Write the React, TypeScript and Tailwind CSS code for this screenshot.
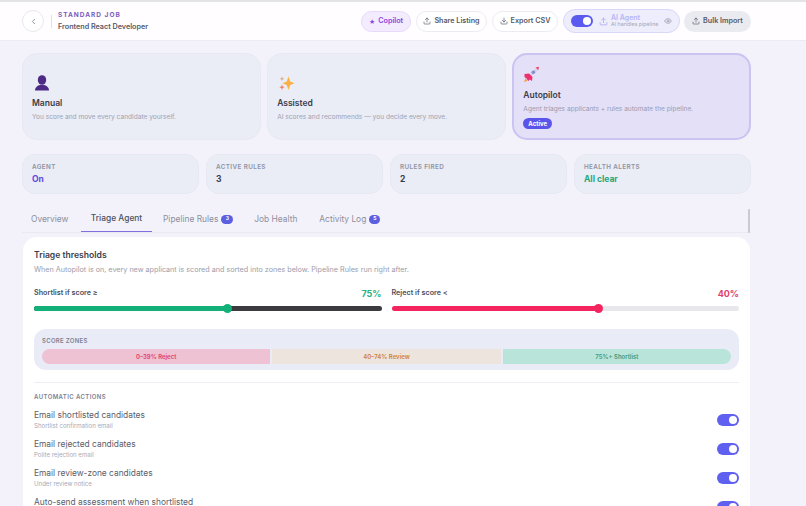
import { ChevronLeft, Download, Eye, Upload } from "lucide-react";

const modes = [
  { id: "manual", name: "Manual", desc: "You score and move every candidate yourself." },
  { id: "assisted", name: "Assisted", desc: "AI scores and recommends — you decide every move." },
];

const actions = [
  { title: "Email shortlisted candidates", sub: "Shortlist confirmation email" },
  { title: "Email rejected candidates", sub: "Polite rejection email" },
  { title: "Email review-zone candidates", sub: "Under review notice" },
  { title: "Auto-send assessment when shortlisted", sub: "\u00a0" },
];

function PersonIcon() {
  return (
    <svg width="16" height="16" viewBox="0 0 16 16">
      <ellipse cx="8" cy="5" rx="4.200" ry="4.800" fill="#4c2a85" />
      <path d="M1 15.500c0-3.400 2.800-5 5-5.500h4c2.200.5 5 2.100 5 5.500z" fill="#4c2a85" />
    </svg>
  );
}

function SparkleIcon() {
  return (
    <svg width="16" height="16" viewBox="0 0 16 16">
      <path d="M9.500 1.500 11.200 6.500 15.500 8.300 11.200 10.100 9.500 15 7.800 10.100 3.500 8.300 7.800 6.500z" fill="#fbb040" />
      <path d="M3 9.500 3.800 11.400 5.700 12.200 3.800 13 3 15 2.200 13 .3 12.200 2.200 11.400z" fill="#f4845f" />
      <path d="M3 1.500 3.700 3 5.200 3.700 3.700 4.400 3 6 2.300 4.400 .8 3.700 2.300 3z" fill="#d8b38a" />
    </svg>
  );
}

function RocketIcon() {
  return (
    <svg width="17" height="17" viewBox="0 0 17 17">
      <path d="M5 10 12.500 2.500 14.500 4.500 7 12z" fill="#d3cfe8" />
      <circle cx="10.300" cy="6.300" r="1.800" fill="#7f8fc9" />
      <path d="M12.500 1.500 16 .8 15.300 4.300 14 3z" fill="#ef4565" />
      <path d="M1.500 8 6 7.500 9.500 11 9 15 6.800 13.500 5.300 15 3.500 12.500 1.500 11z" fill="#ec2f70" />
      <path d="M2.500 12.500 4.800 14.800 .8 16z" fill="#f59e42" />
    </svg>
  );
}

function Toggle() {
  return (
    <div className="flex h-[12px] w-[22px] shrink-0 items-center justify-end rounded-full bg-[#6060f0] pr-[2px]">
      <div className="h-[8px] w-[8px] rounded-full bg-white" />
    </div>
  );
}

function Stat({ label, value, color }: { label: string; value: string; color: string }) {
  return (
    <div className="h-[40px] rounded-[13px] border border-[#e6e8f3] bg-[#eaecf6] px-[9px] pt-[8px]">
      <div className="text-[6.300px] font-semibold leading-[9px] tracking-[0.4px] text-[#8f93a3]">{label}</div>
      <div className={`mt-[1px] text-[8.500px] font-bold leading-[13px] ${color}`}>{value}</div>
    </div>
  );
}

function Slider({ label, value, valueColor, fill, track, thumb, pct }: { label: string; value: string; valueColor: string; fill: string; track: string; thumb: string; pct: number }) {
  return (
    <div className="flex-1">
      <div className="flex items-center justify-between">
        <span className="text-[7.200px] font-semibold text-[#4b5060]">{label}</span>
        <span className={`pt-[2px] text-[9px] font-bold leading-[12px] ${valueColor}`}>{value}</span>
      </div>
      <div className={`relative mt-[6px] h-[5px] rounded-full ${track}`}>
        <div className={`h-full rounded-full ${fill}`} style={{ width: `${pct}%` }} />
        <div className={`absolute top-[-2px] ml-[-4px] h-[9px] w-[9px] rounded-full ${thumb}`} style={{ left: `${pct}%` }} />
      </div>
    </div>
  );
}

export default function App() {
  return (
    <div className="h-[506px] w-[806px] overflow-hidden bg-[#f3f2fa] font-['Inter',sans-serif]">
      <div className="h-[2px] bg-[#e4e4e6]" />
      <header className="flex h-[39px] items-center border-b border-[#ecebf3] bg-[#fffdff] pl-[22px] pr-[55px]">
        <button className="flex h-[22px] w-[22px] items-center justify-center rounded-full border border-[#e8e8ee] bg-white">
          <ChevronLeft size={9} className="text-[#6b7280]" />
        </button>
        <div className="ml-[7px] h-[13px] w-px bg-[#dfdfe6]" />
        <div className="ml-[6px]">
          <div className="text-[6.500px] font-bold leading-[9px] tracking-[1px] text-[#7a5cc0]">STANDARD JOB</div>
          <div className="mt-[1px] text-[7.200px] font-semibold leading-[11px] text-[#555a68]">Frontend React Developer</div>
        </div>
        <div className="ml-auto flex items-center gap-[5px]">
          <button className="flex h-[21px] w-[50px] items-center justify-center gap-[3px] rounded-full border border-[#e6d9fb] bg-[#f3ecfe] text-[7.200px] font-semibold text-[#8a3fe0]">
            <span className="text-[6px]">★</span>Copilot
          </button>
          <button className="flex h-[21px] w-[71px] items-center justify-center gap-[3px] rounded-full border border-[#ecebf2] bg-white text-[7.200px] font-semibold text-[#555a68]">
            <Upload size={8} />Share Listing
          </button>
          <button className="flex h-[21px] w-[66px] items-center justify-center gap-[3px] rounded-full border border-[#ecebf2] bg-white text-[7.200px] font-semibold text-[#555a68]">
            <Download size={8} />Export CSV
          </button>
          <div className="flex h-[24px] w-[117px] items-center rounded-full border border-[#d9d7f8] bg-[#eeedfc] pl-[7px] pr-[7px]">
            <div className="flex h-[12px] w-[22px] items-center justify-end rounded-full bg-[#5b5bf0] pr-[2px]">
              <div className="h-[8px] w-[8px] rounded-full bg-white" />
            </div>
            <Upload size={9} className="ml-[6px] text-[#a5a6f3]" />
            <div className="ml-[3px]">
              <div className="text-[7px] font-semibold leading-[7px] text-[#b4b5f6]">AI Agent</div>
              <div className="text-[5.300px] leading-[7px] text-[#a3a5b5]">AI handles pipeline</div>
            </div>
            <Eye size={8} className="ml-auto text-[#8f93a3]" />
          </div>
          <button className="ml-[-1px] flex h-[21px] w-[67px] items-center justify-center gap-[3px] rounded-full bg-[#e9ebf1] text-[7.200px] font-semibold text-[#555a68]">
            <Upload size={8} />Bulk Import
          </button>
        </div>
      </header>

      <main className="ml-[22px] w-[729px] pt-[12px]">
        <div className="grid grid-cols-3 gap-[6.500px]">
          {modes.map((m) => (
            <div key={m.id} className="flex h-[87px] flex-col rounded-[15px] border border-[#e6e8f3] bg-[#eaecf6] px-[9px] pt-[21px]">
              <div className="pl-[2px]">{m.id === "manual" ? <PersonIcon /> : <SparkleIcon />}</div>
              <div className="mt-[6px] text-[8.500px] font-semibold leading-[12px] text-[#3a3d4a]">{m.name}</div>
              <div className="mt-[3px] text-[6.600px] leading-[10px] text-[#a0a3b1]">{m.desc}</div>
            </div>
          ))}
          <div className="flex h-[87px] flex-col rounded-[15px] border-2 border-[#c9c4f2] bg-[#e4e0f8] px-[9px] pt-[11px]">
            <RocketIcon />
            <div className="mt-[6px] text-[8.500px] font-semibold leading-[12px] text-[#3a3d4a]">Autopilot</div>
            <div className="mt-[3px] text-[6.600px] leading-[10px] text-[#9a9cb0]">Agent triages applicants + rules automate the pipeline.</div>
            <div className="mt-[4px] w-fit rounded-full bg-[#5b54ea] px-[5px] text-[6px] font-bold leading-[11px] text-white">Active</div>
          </div>
        </div>

        <div className="mt-[14px] grid grid-cols-4 gap-[7px]">
          <Stat label="AGENT" value="On" color="text-[#6547e0]" />
          <Stat label="ACTIVE RULES" value="3" color="text-[#3a3d4a]" />
          <Stat label="RULES FIRED" value="2" color="text-[#3a3d4a]" />
          <Stat label="HEALTH ALERTS" value="All clear" color="text-[#1fa97a]" />
        </div>

        <div className="relative mt-[12px] flex h-[27px] items-stretch border-b border-[#e9e9f2] text-[8.400px]">
          <div className="flex w-[59px] items-center pl-[9px] text-[#8c8f9e]">Overview</div>
          <div className="flex w-[71px] items-center justify-center border-b border-[#7f6fe0] font-medium text-[#4b5060]">Triage Agent</div>
          <div className="ml-[11px] flex items-center gap-[3px] text-[#8c8f9e]">
            Pipeline Rules
            <span className="flex h-[9px] w-[12px] items-center justify-center rounded-full bg-[#5b5fe0] text-[5px] font-bold text-white">3</span>
          </div>
          <div className="ml-[21px] flex items-center text-[#8c8f9e]">Job Health</div>
          <div className="ml-[22px] flex items-center gap-[3px] text-[#8c8f9e]">
            Activity Log
            <span className="flex h-[9px] w-[11px] items-center justify-center rounded-full bg-[#5b5fe0] text-[5px] font-bold text-white">5</span>
          </div>
          <div className="absolute right-[1px] top-[3px] h-[24px] w-[2px] rounded-full bg-[#c8cad6]" />
        </div>

        <section className="ml-[1px] mt-[4px] h-[300px] w-[727px] rounded-t-[14px] bg-white px-[11px] pt-[13px]">
          <h2 className="text-[8.600px] font-semibold leading-[11px] text-[#3a3d4a]">Triage thresholds</h2>
          <p className="mt-[4px] text-[7.200px] leading-[10px] text-[#9a9cab]">
            When Autopilot is on, every new applicant is scored and sorted into zones below. Pipeline Rules run right after.
          </p>
          <div className="mt-[11px] flex gap-[10px]">
            <Slider label="Shortlist if score ≥" value="75%" valueColor="text-[#2fae80]" fill="bg-[#14b07a]" track="bg-[#3c3c40]" thumb="bg-[#14b07a]" pct={55.500} />
            <Slider label="Reject if score <" value="40%" valueColor="text-[#e23d6d]" fill="bg-[#f4245e]" track="bg-[#e8e8ec]" thumb="bg-[#f4245e]" pct={59.500} />
          </div>

          <div className="mt-[18px] h-[41px] w-[705px] rounded-[12px] bg-[#e9ecf6] px-[8px] pt-[7px]">
            <div className="text-[6px] font-semibold leading-[9px] tracking-[0.300px] text-[#7d8192]">SCORE ZONES</div>
            <div className="mt-[4px] flex h-[14.500px] gap-[2px] overflow-hidden rounded-full text-[6px] font-semibold">
              <div className="flex flex-1 items-center justify-center bg-[#eec1d3] text-[#e23d6d]">0–39% Reject</div>
              <div className="flex flex-1 items-center justify-center bg-[#ede4de] text-[#d0803a]">40–74% Review</div>
              <div className="flex flex-1 items-center justify-center bg-[#b9e4da] text-[#3f9a80]">75%+ Shortlist</div>
            </div>
          </div>

          <div className="mt-[12px] w-[705px] border-t border-[#eceef3] pt-[9px]">
            <div className="text-[6px] font-semibold leading-[9px] tracking-[0.400px] text-[#7d8192]">AUTOMATIC ACTIONS</div>
            <div className="mt-[4px]">
              {actions.map((a) => (
                <div key={a.title} className="flex h-[29px] items-center justify-between">
                  <div>
                    <div className="text-[8.400px] leading-[12px] text-[#5a5e6c]">{a.title}</div>
                    <div className="text-[6.100px] leading-[9px] text-[#a7a9b6]">{a.sub}</div>
                  </div>
                  <Toggle />
                </div>
              ))}
            </div>
          </div>
        </section>
      </main>
    </div>
  );
}
